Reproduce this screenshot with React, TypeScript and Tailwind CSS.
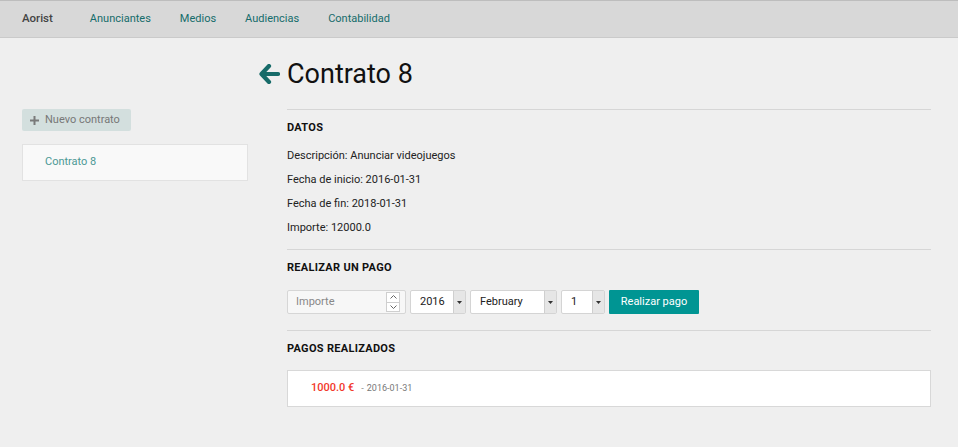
import React from "react";

const navLinks = ["Anunciantes", "Medios", "Audiencias", "Contabilidad"];

const datos = [
  "Descripción: Anunciar videojuegos",
  "Fecha de inicio: 2016-01-31",
  "Fecha de fin: 2018-01-31",
  "Importe: 12000.0",
];

// Fake select box with the grey arrow column on the right
const SelectBox: React.FC<{ value: string; width: string }> = ({ value, width }) => (
  <div className={`${width} h-[24px] flex bg-white border border-[#d4d4d4] rounded-[2px]`}>
    <div className="flex-1 flex items-center pl-[9px] text-[11px] text-[#222]">{value}</div>
    <div className="w-[12px] flex items-center justify-center bg-[#e6e6e6] border-l border-[#cfcfcf]">
      <svg width="5" height="3" viewBox="0 0 5 3">
        <path d="M0 0h5L2.5 3z" fill="#333" />
      </svg>
    </div>
  </div>
);

const SectionTitle: React.FC<{ children: React.ReactNode }> = ({ children }) => (
  <h4 className="text-[11px] font-bold text-[#111] tracking-[0.3px] leading-[18px]">{children}</h4>
);

export default function App() {
  return (
    <div
      className="min-h-[447px] bg-[#efefef] text-[#222]"
      style={{ fontFamily: "Roboto, 'Liberation Sans', sans-serif" }}
    >
      {/* Navbar */}
      <nav className="h-[38px] flex items-center bg-[#d8d8d8] border-t border-[#bdbdbd] border-b border-b-[#cacaca] px-[22px] text-[11px]">
        <span className="font-medium text-[#444] text-[11.5px] mr-[37px]">Aorist</span>
        <div className="flex gap-[29px]">
          {navLinks.map((l) => (
            <a key={l} className="text-[#156c6b]">
              {l}
            </a>
          ))}
        </div>
      </nav>

      <div className="flex pl-[22px]">
        {/* Sidebar */}
        <aside className="w-[226px] pt-[71px]">
          <button className="h-[22px] w-[109px] flex items-center gap-[6px] pl-[8px] bg-[#d3dfde] rounded-[2px] text-[11px] text-[#777]">
            <svg width="9" height="9" viewBox="0 0 9 9">
              <path d="M3.5 0h2v3.5H9v2H5.5V9h-2V5.5H0v-2h3.5z" fill="#7a7a7a" />
            </svg>
            Nuevo contrato
          </button>
          <div className="mt-[13px] h-[37px] flex items-center pl-[22px] bg-[#f9f9f9] border border-[#e2e2e2] text-[11px] text-[#4c9895]">
            Contrato 8
          </div>
        </aside>

        {/* Main */}
        <main className="ml-[39px] w-[644px]">
          <div className="-ml-[28px] h-[71px] flex items-end pb-[19px]">
            <svg width="21" height="20" viewBox="0 0 21 20" className="mb-[6px] mr-[7px]">
              <path
                d="M10 2 L2.5 10 L10 18 M3.5 10 H19"
                stroke="#176b69"
                strokeWidth="4.2"
                strokeLinecap="round"
                strokeLinejoin="round"
                fill="none"
              />
            </svg>
            <h1 className="text-[27px] leading-[32px] text-[#111]">Contrato 8</h1>
          </div>

          <div className="border-t border-[#d6d6d6] pt-[9px] pb-[9px]">
            <SectionTitle>DATOS</SectionTitle>
            <div className="mt-[7px] flex flex-col text-[11px] leading-[24px]">
              {datos.map((d) => (
                <p key={d}>{d}</p>
              ))}
            </div>
          </div>

          <div className="border-t border-[#d6d6d6] pt-[9px] pb-[16px]">
            <SectionTitle>REALIZAR UN PAGO</SectionTitle>
            <div className="mt-[13px] flex gap-[4px]">
              <div className="w-[119px] h-[24px] flex bg-[#f7f7f7] border border-[#d6d6d6] rounded-[2px]">
                <div className="flex-1 flex items-center pl-[8px] text-[11px] text-[#888]">Importe</div>
                <div className="w-[14px] my-[1px] mr-[5px] flex flex-col">
                  <div className="flex-1 flex items-center justify-center bg-white border border-[#cfcfcf]">
                    <svg width="7" height="4" viewBox="0 0 7 4">
                      <path d="M0.5 3.5 L3.5 0.5 L6.5 3.5" stroke="#666" fill="none" />
                    </svg>
                  </div>
                  <div className="flex-1 flex items-center justify-center bg-white border border-t-0 border-[#cfcfcf]">
                    <svg width="7" height="4" viewBox="0 0 7 4">
                      <path d="M0.5 0.5 L3.5 3.5 L6.5 0.5" stroke="#666" fill="none" />
                    </svg>
                  </div>
                </div>
              </div>
              <SelectBox value="2016" width="w-[56px]" />
              <SelectBox value="February" width="w-[87px]" />
              <SelectBox value="1" width="w-[44px]" />
              <button className="w-[90px] h-[24px] bg-[#009593] text-white text-[11px] rounded-[1px]">
                Realizar pago
              </button>
            </div>
          </div>

          <div className="border-t border-[#d6d6d6] pt-[9px]">
            <SectionTitle>PAGOS REALIZADOS</SectionTitle>
            <div className="mt-[12px] h-[37px] flex items-center pl-[23px] bg-white border border-[#d8d8d8]">
              <span className="text-[11px] font-medium text-[#f2372a]">1000.0 €</span>
              <span className="ml-[7px] text-[9px] text-[#888]">-</span>
              <span className="ml-[3px] text-[9px] text-[#777]">2016-01-31</span>
            </div>
          </div>
        </main>
      </div>
    </div>
  );
}
